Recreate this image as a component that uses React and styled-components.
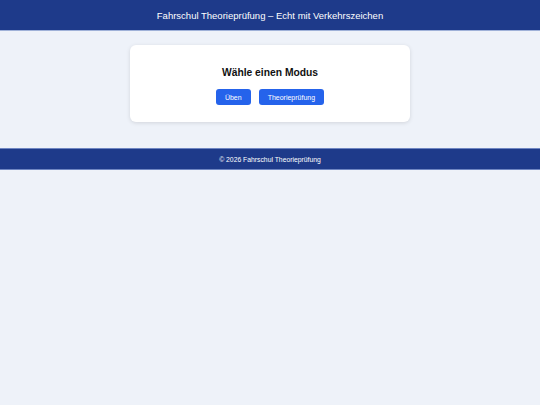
import React from 'react';
import styled, { createGlobalStyle } from 'styled-components';

const GlobalStyle = createGlobalStyle`
  html, body {
    margin: 0;
    padding: 0;
    background: #eef2f9;
    font-family: "Liberation Sans", Arial, sans-serif;
  }
`;

const Header = styled.header`
  background: #1e3a8a;
  color: #ffffff;
  height: 31px;
  display: flex;
  align-items: center;
  justify-content: center;
  font-size: 9.5px;
  border-bottom: 1px solid #9fb1d8;
  box-sizing: border-box;
`;

const Main = styled.main`
  display: flex;
  justify-content: center;
  padding: 14px 0 26px;
`;

const Card = styled.section`
  width: 280px;
  height: 77px;
  box-sizing: border-box;
  background: #ffffff;
  border-radius: 6px;
  box-shadow: 0 1px 4px rgba(0, 0, 0, 0.12);
  display: flex;
  flex-direction: column;
  align-items: center;
  padding-top: 22px;
`;

const Title = styled.h2`
  margin: 0 0 11px;
  font-size: 10.3px;
  font-weight: 700;
  color: #111111;
`;

const Actions = styled.div`
  display: flex;
  gap: 8px;
`;

const Button = styled.button`
  background: #2563eb;
  color: #ffffff;
  border: none;
  border-radius: 3px;
  height: 16px;
  padding: 0 9px;
  font-family: inherit;
  font-size: 7px;
  cursor: pointer;
`;

const Footer = styled.footer`
  background: #1e3a8a;
  color: #ffffff;
  height: 22px;
  display: flex;
  align-items: center;
  justify-content: center;
  font-size: 6.8px;
  border-top: 1px solid #6f86c2;
  border-bottom: 1px solid #6f86c2;
  box-sizing: border-box;
`;

export default function App() {
  return (
    <>
      <GlobalStyle />
      <Header>Fahrschul Theorieprüfung – Echt mit Verkehrszeichen</Header>
      <Main>
        <Card>
          <Title>Wähle einen Modus</Title>
          <Actions>
            <Button>Üben</Button>
            <Button>Theorieprüfung</Button>
          </Actions>
        </Card>
      </Main>
      <Footer>© 2026 Fahrschul Theorieprüfung</Footer>
    </>
  );
}
